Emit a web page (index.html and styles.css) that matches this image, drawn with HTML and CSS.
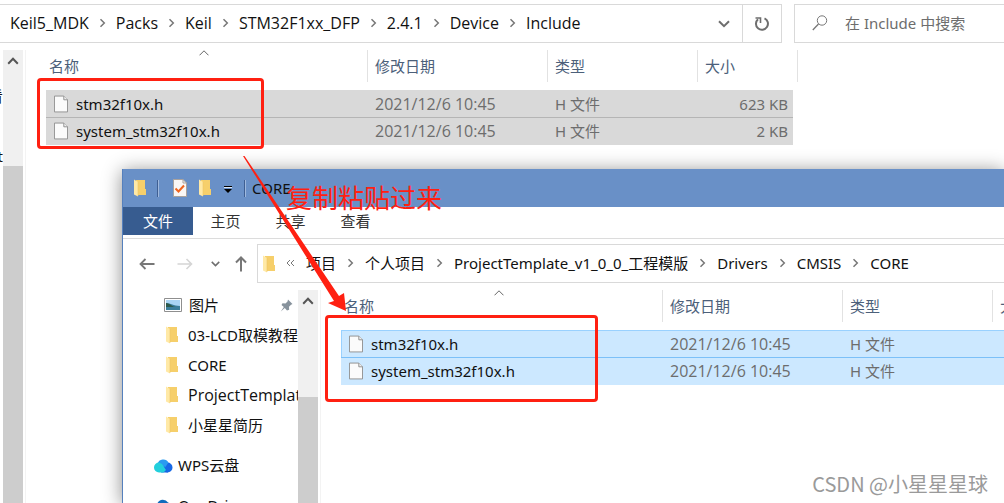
FILE: index.html
```html
<!DOCTYPE html>
<html lang="zh-CN">
<head>
<meta charset="utf-8">
<title>Include</title>
<link rel="stylesheet" href="styles.css">
</head>
<body>
<svg class="defs" aria-hidden="true">
  <symbol id="chev-right" viewBox="0 0 7 10"><path d="M1.5 1.2 5.3 5 1.5 8.8" fill="none" stroke="#777" stroke-width="1.5"/></symbol>
  <symbol id="chev-down" viewBox="0 0 12 8"><path d="M1 1.2 6 6.2 11 1.2" fill="none" stroke="#6e6e6e" stroke-width="2"/></symbol>
  <symbol id="chev-up" viewBox="0 0 12 8"><path d="M1.2 6.8 6 1.8 10.8 6.8" fill="none" stroke="#555" stroke-width="2"/></symbol>
  <symbol id="sort" viewBox="0 0 10 6"><path d="M.5 5.3 5 .8 9.500 5.3" fill="none" stroke="#666" stroke-width="1"/></symbol>
  <symbol id="file" viewBox="0 0 15 18"><path d="M.5.5h10l4 4v13H.5z" fill="#fbfbfb" stroke="#8e8e8e"/><path d="M10.500.5v4h4" fill="#eee" stroke="#8e8e8e"/></symbol>
  <symbol id="folder" viewBox="0 0 14 18"><path d="M3 1h9v9h1v6H3z" fill="#f6cf6b"/><path d="M1 .5 5 3v14.500L1 15.500z" fill="#ffe9a6"/><path d="M5 3v14" stroke="#eec666" stroke-width=".6"/></symbol>
  <symbol id="cloud" viewBox="0 0 20 15"><circle cx="14.500" cy="9.500" r="5" fill="#1769e6"/><path d="M4.500 6A6 6 0 0 1 15.500 4.600L11 11z" fill="#2a9bf0"/><path d="M8 14.500h7L11 8z" fill="#1565e0"/><path d="M6 4.500a5 5 0 1 0 0 10h4.500L13 12 9 6z" fill="#22cfdc"/></symbol>
  <symbol id="onedrive" viewBox="0 0 20 15"><path d="M5 14a5 5 0 0 1-.5-9A6 6 0 0 1 15 4.500 5 5 0 0 1 15 14z" fill="#0f6cbd"/></symbol>
</svg>

<main class="desktop">
  <section class="explorer">
    <div class="bar">
      <div class="address">
        <nav class="crumbs latin">
          <button>Keil5_MDK</button><svg class="sep"><use href="#chev-right"/></svg>
          <button>Packs</button><svg class="sep"><use href="#chev-right"/></svg>
          <button>Keil</button><svg class="sep"><use href="#chev-right"/></svg>
          <button>STM32F1xx_DFP</button><svg class="sep"><use href="#chev-right"/></svg>
          <button>2.4.1</button><svg class="sep"><use href="#chev-right"/></svg>
          <button>Device</button><svg class="sep"><use href="#chev-right"/></svg>
          <button>Include</button>
        </nav>
        <button class="history" aria-label="以前的位置"><svg class="chev"><use href="#chev-down"/></svg></button>
        <button class="refresh" aria-label="刷新"><svg width="16" height="16" viewBox="0 0 16 16"><path d="M10.500 2.300A6 6 0 1 1 4 3.200" fill="none" stroke="#6e6e6e" stroke-width="2"/><path d="M1.500 2h5v5" fill="none" stroke="#6e6e6e" stroke-width="1.600"/></svg></button>
      </div>
      <label class="search">
        <svg width="16" height="16" viewBox="0 0 16 16"><circle cx="10" cy="5.500" r="4.700" fill="none" stroke="#777"/><path d="M6.500 9 .8 15" stroke="#777" stroke-width="1.300"/></svg>
        <input type="text" placeholder="在 Include 中搜索" aria-label="搜索">
      </label>
    </div>
    <div class="panes">
      <div class="sliver"><span>看</span><span>Project</span></div>
      <div class="scroll scroll-back"><svg class="chev"><use href="#chev-up"/></svg><i></i></div>
      <div class="list">
        <table class="files gray">
          <thead><tr><th class="name">名称<svg class="sort"><use href="#sort"/></svg></th><th class="date">修改日期</th><th class="type">类型</th><th class="size">大小</th><th class="end"></th></tr></thead>
          <tbody>
            <tr><td class="name"><svg class="doc"><use href="#file"/></svg>stm32f10x.h</td><td class="time">2021/12/6 10:45</td><td>H 文件</td><td class="num">623 KB</td></tr>
            <tr><td class="name"><svg class="doc"><use href="#file"/></svg>system_stm32f10x.h</td><td class="time">2021/12/6 10:45</td><td>H 文件</td><td class="num">2 KB</td></tr>
          </tbody>
        </table>
      </div>
    </div>
  </section>

  <section class="explorer front">
    <header class="title">
      <svg class="dir"><use href="#folder"/></svg><i class="rule"></i>
      <svg class="props" width="14" height="18" viewBox="0 0 14 18"><path d="M.5.5h9.500l3.500 3.500v13.500H.5z" fill="#faf7f5" stroke="#aaa29d"/><path d="M10 .5v3.500h3.500" fill="none" stroke="#aaa29d"/><path d="m2.500 9.500 3 3L11 6.500" fill="none" stroke="#f0641e" stroke-width="2"/></svg>
      <svg class="dir"><use href="#folder"/></svg>
      <svg class="more" width="8" height="7" viewBox="0 0 8 7"><path d="M0 .5h8" stroke="#000"/><path d="M0 3h8L4 7z"/><path d="M0 1.500h8" stroke="#dce8f8"/></svg>
      <i class="rule"></i><span>CORE</span>
    </header>
    <nav class="tabs"><button class="active">文件</button><button>主页</button><button>共享</button><button>查看</button></nav>
    <div class="bar">
      <div class="nav">
        <button aria-label="返回"><svg width="16" height="12" viewBox="0 0 16 12"><path d="M15.500 6H1.500M6.500 1l-5 5 5 5" fill="none" stroke="#777" stroke-width="1.800"/></svg></button>
        <button aria-label="前进"><svg width="16" height="12" viewBox="0 0 16 12"><path d="M.5 6h14M9.500 1l5 5-5 5" fill="none" stroke="#d5d5d5" stroke-width="1.600"/></svg></button>
        <button class="tiny" aria-label="最近浏览的位置"><svg width="9" height="6" viewBox="0 0 12 8"><use href="#chev-down"/></svg></button>
        <button class="up" aria-label="向上"><svg width="12" height="16" viewBox="0 0 12 16"><path d="M6 15.500v-14M1 6.500l5-5 5 5" fill="none" stroke="#777" stroke-width="2"/></svg></button>
      </div>
      <div class="address">
        <svg class="dir"><use href="#folder"/></svg>
        <nav class="crumbs">
          <svg class="dbl" width="9" height="8" viewBox="0 0 9 8"><path d="M4 1 1 4l3 3M8 1 5 4l3 3" fill="none" stroke="#777"/></svg>
          <button>项目</button><svg class="sep"><use href="#chev-right"/></svg>
          <button>个人项目</button><svg class="sep"><use href="#chev-right"/></svg>
          <button>ProjectTemplate_v1_0_0_工程模版</button><svg class="sep"><use href="#chev-right"/></svg>
          <button>Drivers</button><svg class="sep"><use href="#chev-right"/></svg>
          <button>CMSIS</button><svg class="sep"><use href="#chev-right"/></svg>
          <button>CORE</button>
        </nav>
      </div>
    </div>
    <div class="panes">
      <ul class="tree">
        <li><svg class="pic" width="18" height="14" viewBox="0 0 18 14"><path d="M.5.5h17v13H.5z" fill="#fff" stroke="#8f8f8f"/><path d="M2 2h14v10H2z" fill="#a9d5f5"/><path d="M2 5c5 0 7 3 14 3v4H2z" fill="#3c7f9c"/><path d="M2 5c4 0 6 4 10 4H2z" fill="#2d5a4c"/></svg><span>图片</span><svg class="pin" width="13" height="13" viewBox="0 0 13 13"><path d="m8 .5 4.500 4.500-1.500.8-2 2 .2 3L7 11.500 4.800 9 .8 12.500 3.800 8 1.500 6l1-1.800 3 .2 2-2z" fill="#87929c"/></svg></li>
        <li><svg class="dir"><use href="#folder"/></svg><span>03-LCD取模教程</span></li>
        <li><svg class="dir"><use href="#folder"/></svg><span>CORE</span></li>
        <li><svg class="dir"><use href="#folder"/></svg><span class="latin">ProjectTemplate_v1_0_0</span></li>
        <li><svg class="dir"><use href="#folder"/></svg><span>小星星简历</span></li>
        <li class="root"><svg class="cloud"><use href="#cloud"/></svg><span>WPS云盘</span></li>
        <li class="root"><svg class="cloud"><use href="#onedrive"/></svg><span>OneDrive</span></li>
      </ul>
      <div class="scroll"><svg class="chev"><use href="#chev-up"/></svg><i></i></div>
      <div class="list">
        <table class="files blue">
          <thead><tr><th class="name">名称<svg class="sort"><use href="#sort"/></svg></th><th class="date">修改日期</th><th class="type">类型</th><th class="size">大小</th></tr></thead>
          <tbody>
            <tr><td class="name"><svg class="doc"><use href="#file"/></svg>stm32f10x.h</td><td class="time">2021/12/6 10:45</td><td>H 文件</td><td></td></tr>
            <tr><td class="name"><svg class="doc"><use href="#file"/></svg>system_stm32f10x.h</td><td class="time">2021/12/6 10:45</td><td>H 文件</td><td></td></tr>
          </tbody>
        </table>
      </div>
    </div>
  </section>

  <div class="mark mark-source"></div>
  <div class="mark mark-target"></div>
  <svg class="arrow" width="106" height="158" viewBox="0 0 106 158"><path d="M0 1 1.500 1 96 141 101 138 103 156 85 148 91 146z" fill="#ff2011"/></svg>
  <p class="note">复制粘贴过来</p>
  <p class="watermark">CSDN @小星星星球</p>
</main>
</body>
</html>
```
FILE: styles.css
```css
* { box-sizing: border-box; }
body {
  margin: 0;
  font: 15px/20px "Noto Sans", "Noto Sans CJK SC", sans-serif;
  color: #111;
  background: #fff;
}
button, input { font: inherit; color: inherit; border: 0; padding: 0; background: none; }
p, ul { margin: 0; padding: 0; list-style: none; }
svg { flex: none; display: block; }
.defs { position: absolute; width: 0; height: 0; }
.latin, .files td.time { font-family: "Open Sans", sans-serif; font-size: 16px; }
.desktop { position: relative; height: 100vh; overflow: hidden; }
.explorer { display: flex; flex-direction: column; height: 100%; background: #fff; }
.front {
  position: absolute;
  inset: 169px 0 0 122px;
  height: auto;
  border-left: 1px solid #5580bd;
  box-shadow: 0 2px 18px rgba(0, 0, 0, .45);
}

.bar { display: flex; padding-top: 4px; margin-bottom: 7px; }
.front .bar { padding-top: 5px; }
.address { display: flex; align-items: center; flex: 1; min-width: 0; height: 39px; border: 1px solid #d9d9d9; }
.explorer:not(.front) .address { border-left: 0; }
.front .address { border-right: 0; padding-left: 4px; }
.crumbs { display: flex; align-items: center; gap: 10px; flex: 1; padding: 0 0 2px 10px; white-space: nowrap; }
.front .crumbs { gap: 11px; }
.sep { width: 7px; height: 10px; }
.chev { width: 12px; height: 8px; }
.history { display: flex; padding: 0 12px; }
.refresh { display: flex; align-items: center; justify-content: center; width: 39px; align-self: stretch; border-left: 1px solid #d9d9d9; }
.search { display: flex; align-items: center; gap: 17px; flex: 0 0 210px; margin-left: 12px; padding: 0 0 2px 17px; border: 1px solid #d9d9d9; border-right: 0; }
.search input { width: 100%; min-width: 0; outline: 0; }
.search input::placeholder { color: #6d6d6d; opacity: 1; }

.panes { display: flex; flex: 1; min-height: 0; }
.sliver { display: flex; flex-direction: column; align-items: flex-end; gap: 40px; width: 3px; padding-top: 36px; overflow: hidden; }
.scroll { display: flex; flex-direction: column; align-items: center; flex: none; width: 20px; padding-top: 7px; background: #f0f0f0; }
.scroll i { width: 100%; flex: 1; margin-top: 92px; background: #cdcdcd; }
.scroll-back i { margin-top: 101px; }
.list { flex: 1; min-width: 0; margin-left: 2px; padding-left: 20px; border-left: 1px solid #f3f3f3; overflow: hidden; }

.files { table-layout: fixed; border-collapse: separate; border-spacing: 0; width: 752px; }
.files th { position: relative; height: 32px; padding: 0 0 0 7px; font-weight: 400; text-align: left; color: #4c607a; border-left: 1px solid #e2e2e2; }
.files th.name { width: 321px; padding-left: 3px; border: 0; }
.files .date { width: 180px; }
.files .type { width: 150px; }
.files .size { width: 96px; }
.files th.end { width: 5px; padding: 0; border-left: 0; border-right: 1px solid #e2e2e2; }
.blue { width: 747px; }
.sort { position: absolute; top: 0; left: 153px; width: 10px; height: 6px; }
.files td { height: 27px; padding: 0 0 0 8px; color: #6d6d6d; white-space: nowrap; }
.files td.name { display: flex; align-items: center; gap: 8px; color: #111; }
.files td.num { padding-right: 5px; text-align: right; }
.files tbody::before { content: ""; display: table-row; height: 8px; }
.doc { width: 14px; height: 18px; }
.gray td { background: #d9d9d9; }
.blue td { background: #cce8ff; border-top: 1px solid #99d1ff; }
.blue tr:first-child td.name { border-left: 1px solid #99d1ff; padding-left: 7px; }
.files tr + tr td { height: 28px; padding-bottom: 2px; border-top: 1px solid #b5b5b5; }
.blue tr + tr td { border-top-color: #7cc0f8; }

.title { display: flex; align-items: center; flex: none; height: 38px; padding-left: 10px; background: #6990c7; }
.dir { width: 14px; height: 18px; }
.rule { width: 1px; height: 17px; margin: 0 15px 0 10px; background: #3f5f92; border-right: 0; box-shadow: 1px 0 #9fb9de; }
.props { margin-right: 11px; }
.more { margin: 3px 4px 0 12px; }
.title .more + .rule { margin: 0 7px 0 8px; }
.tabs { display: flex; flex: none; height: 32px; padding-bottom: 3px; border-bottom: 1px solid #dcdcdc; }
.tabs button { width: 65px; color: #333; }
.tabs .active { width: 70px; background: #375c90; color: #fff; }
.nav { display: flex; align-items: center; gap: 22px; width: 134px; padding-left: 16px; }
.nav button { display: flex; }
.nav .tiny { margin-left: -4px; }
.nav .up { margin-left: -7px; }

.tree { flex: none; width: 175px; overflow: hidden; }
.tree li { display: flex; align-items: center; gap: 8px; height: 30px; padding-left: 42px; white-space: nowrap; }
.tree li .pic { margin-left: -1px; margin-right: -1px; }
.tree li .dir { margin-right: 1px; }
.tree li .pic + span { flex: 1; }
.pin { margin-right: 5px; }
.tree .root { height: 40px; padding: 0 0 0 30px; gap: 5px; }
.cloud { width: 20px; height: 15px; }
.root:nth-last-child(2) { margin-top: 5px; }

.mark { position: absolute; border: 3px solid #ff2011; border-radius: 4px; }
.mark-source { left: 37px; top: 78px; width: 227px; height: 71px; }
.mark-target { left: 325px; top: 315px; width: 273px; height: 87px; }
.arrow { position: absolute; left: 243px; top: 155px; }
.note { position: absolute; left: 286px; top: 180px; font-size: 26px; line-height: 36px; color: #ff2011; }
.watermark { position: absolute; right: 16px; bottom: 4px; font: 20px/30px "Noto Sans CJK SC", sans-serif; color: #9a9a9a; }
```
